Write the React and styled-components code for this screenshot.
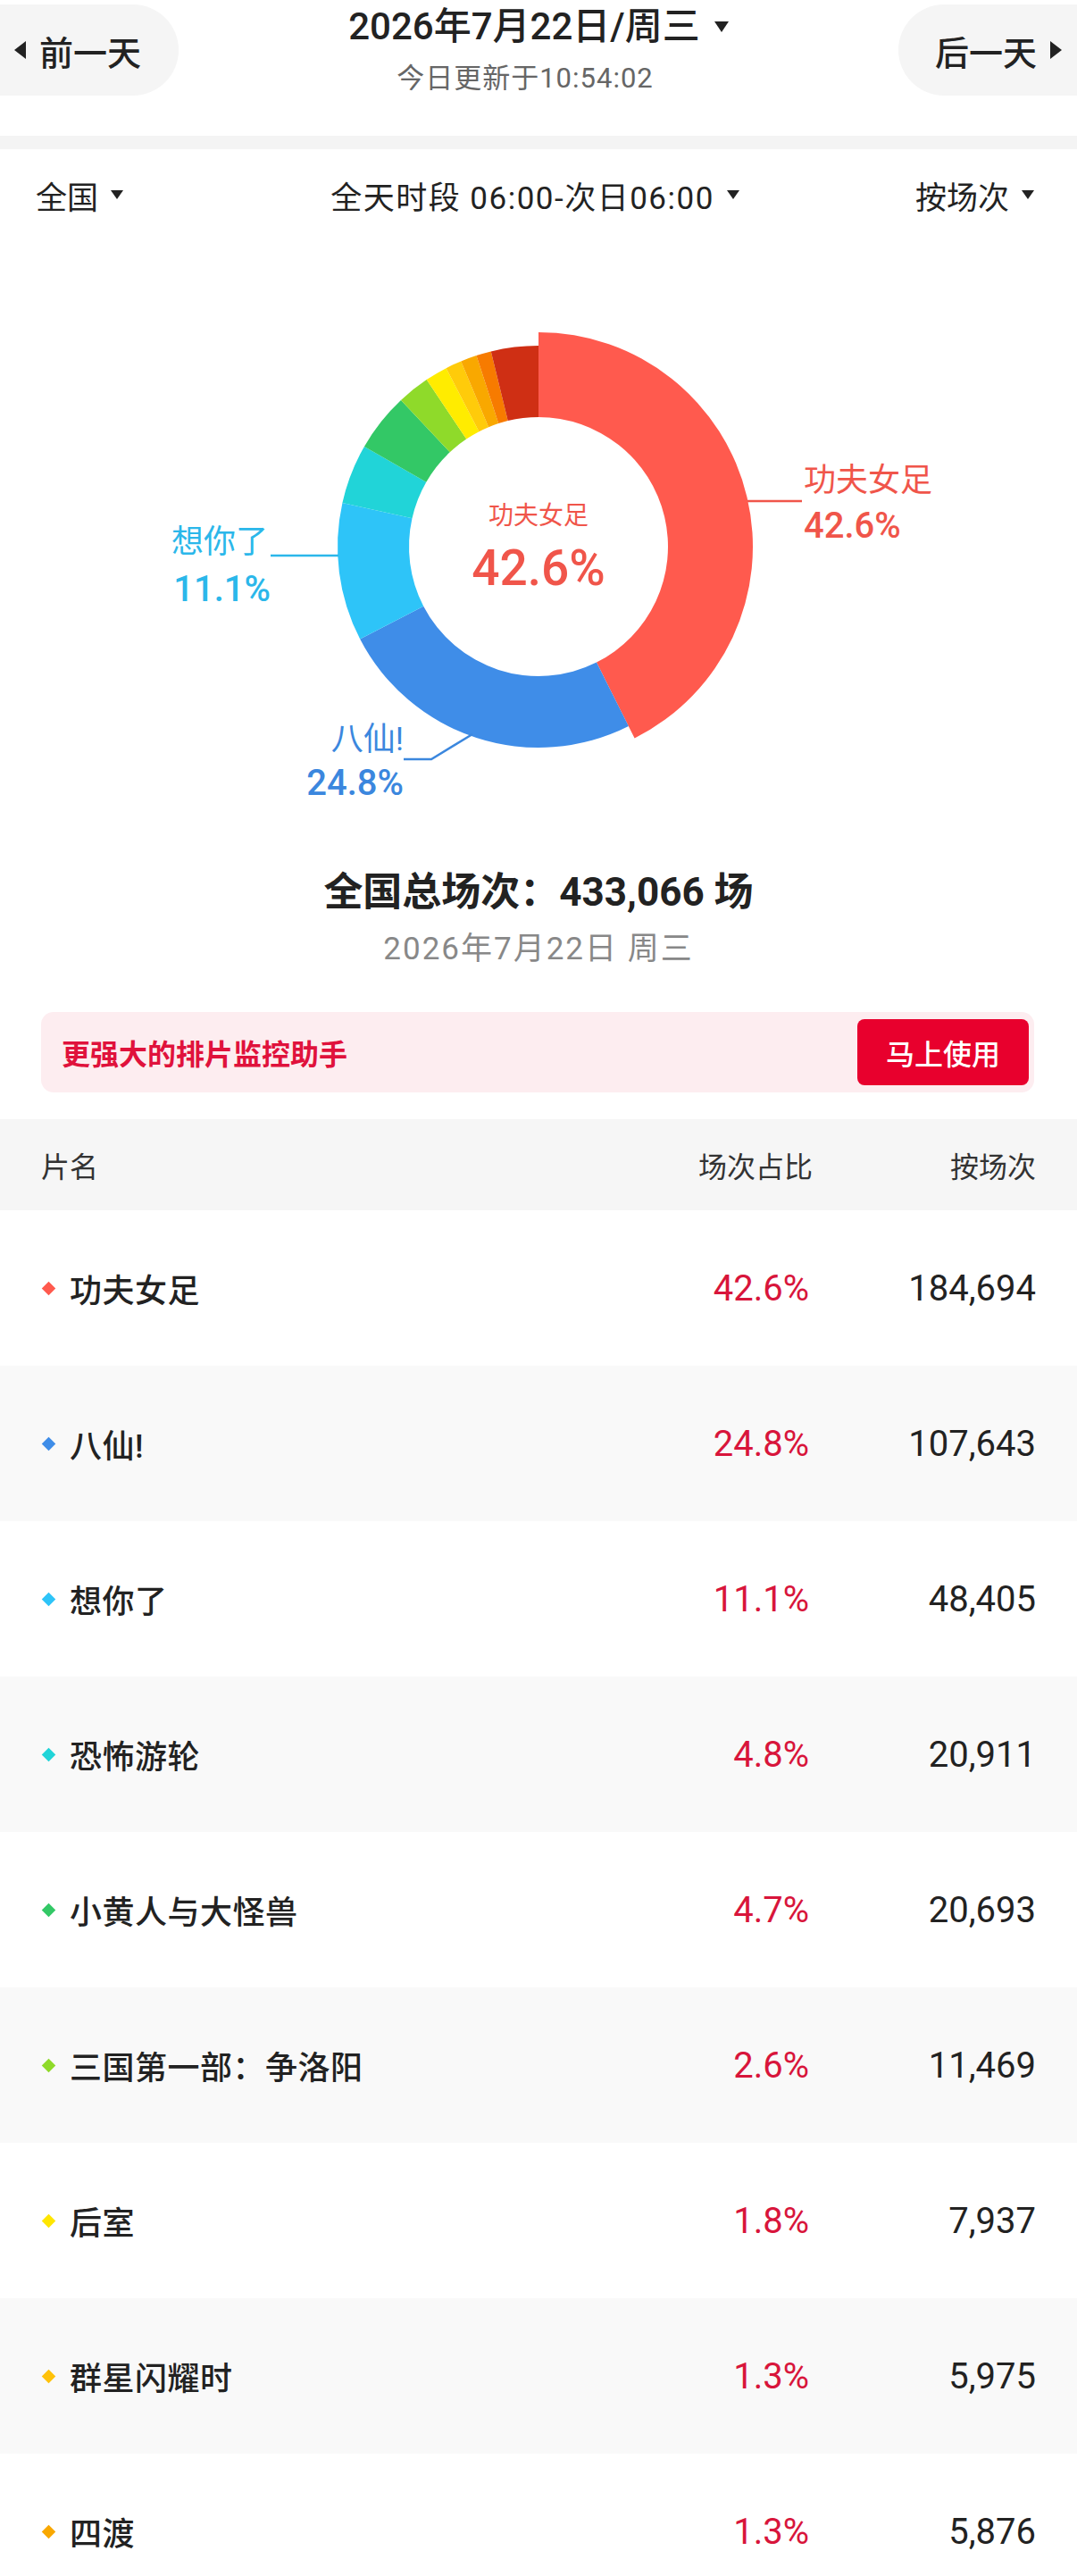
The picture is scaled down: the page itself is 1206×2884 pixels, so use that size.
import React from 'react';
import styled, { createGlobalStyle, css } from 'styled-components';

const GlobalStyle = createGlobalStyle`
    body {
        margin: 0;
        background: #ffffff;
        font-family: Roboto, "Noto Sans CJK SC", "Noto Sans", sans-serif;
        color: #222;
        overflow-x: hidden;
    }
`;

const slices = [
    { name: '功夫女足', value: 42.6, color: '#ff5a4e' },
    { name: '八仙!', value: 24.8, color: '#3f8de8' },
    { name: '想你了', value: 11.1, color: '#2ec4f8' },
    { name: '恐怖游轮', value: 4.8, color: '#21d4d8' },
    { name: '小黄人与大怪兽', value: 4.7, color: '#33c866' },
    { name: '三国第一部：争洛阳', value: 2.6, color: '#8fda2a' },
    { name: '后室', value: 1.8, color: '#ffec00' },
    { name: '群星闪耀时', value: 1.3, color: '#ffcb0a' },
    { name: '四渡', value: 1.3, color: '#f9a800' },
    { name: 'other-a', value: 1.2, color: '#f77b00' },
    { name: 'other-b', value: 3.8, color: '#cf2f14' },
];

const films = [
    { name: '功夫女足', pct: '42.6%', count: '184,694', color: '#ff5a4e' },
    { name: '八仙!', pct: '24.8%', count: '107,643', color: '#3f8de8' },
    { name: '想你了', pct: '11.1%', count: '48,405', color: '#2ec4f8' },
    { name: '恐怖游轮', pct: '4.8%', count: '20,911', color: '#21d4d8' },
    { name: '小黄人与大怪兽', pct: '4.7%', count: '20,693', color: '#33c866' },
    { name: '三国第一部：争洛阳', pct: '2.6%', count: '11,469', color: '#8fda2a' },
    { name: '后室', pct: '1.8%', count: '7,937', color: '#ffe600' },
    { name: '群星闪耀时', pct: '1.3%', count: '5,975', color: '#ffc20a' },
    { name: '四渡', pct: '1.3%', count: '5,876', color: '#f9a800' },
];

/* ---------- header ---------- */

const Header = styled.header`
    display: flex;
    justify-content: space-between;
    height: 152px;
    background: #fff;
`;

const DayButton = styled.div`
    margin-top: 5px;
    width: 200px;
    height: 102px;
    box-sizing: border-box;
    display: flex;
    align-items: center;
    gap: 15px;
    background: #f5f5f5;
    font-size: 38px;
    font-weight: 500;
    color: #222;
    ${({ $side }) =>
        $side === 'left'
            ? css`
                  border-radius: 0 51px 51px 0;
                  padding-left: 16px;
              `
            : css`
                  border-radius: 51px 0 0 51px;
                  justify-content: flex-end;
                  padding-right: 17px;
              `}
`;

const SideArrow = styled.span`
    width: 0;
    height: 0;
    border-top: 10px solid transparent;
    border-bottom: 10px solid transparent;
    ${({ $dir }) =>
        $dir === 'left'
            ? css`border-right: 13px solid #222;`
            : css`border-left: 13px solid #222;`}
`;

const DropArrow = styled.span`
    display: inline-block;
    width: 0;
    height: 0;
    border-left: ${({ $size }) => $size || 7}px solid transparent;
    border-right: ${({ $size }) => $size || 7}px solid transparent;
    border-top: ${({ $size }) => ($size || 7) * 1.5}px solid #222;
    margin-left: ${({ $gap }) => $gap || 14}px;
    vertical-align: middle;
`;

const TitleBlock = styled.div`
    display: flex;
    flex-direction: column;
    align-items: center;
`;

const DateTitle = styled.div`
    margin-top: 5px;
    font-size: 42px;
    line-height: 50px;
    font-weight: 500;
    color: #222;
    display: flex;
    align-items: center;
`;

const UpdatedAt = styled.div`
    margin-top: 15px;
    margin-right: 30px;
    font-size: 31px;
    line-height: 36px;
    letter-spacing: 1px;
    color: #666;
`;

const Band = styled.div`
    height: 15px;
    background: #f4f4f4;
`;

/* ---------- filters ---------- */

const FilterRow = styled.div`
    display: grid;
    grid-template-columns: 1fr auto 1fr;
    align-items: center;
    height: 102px;
    padding: 0 48px 0 40px;
    font-size: 35px;
    color: #222;
`;

const Filter = styled.div`
    display: flex;
    align-items: center;
    justify-self: ${({ $align }) => $align || 'center'};
    letter-spacing: ${({ $spread }) => ($spread ? '1.5px' : '0')};
`;

/* ---------- donut chart ---------- */

const ChartBox = styled.div`
    display: flex;
    justify-content: center;
    height: 670px;
`;

const ChartText = styled.text`
    font-family: Roboto, "Noto Sans CJK SC", sans-serif;
    font-size: ${({ $size }) => $size}px;
    font-weight: ${({ $bold }) => ($bold ? 500 : 400)};
    fill: ${({ $color }) => $color};
`;

const CX = 603;
const CY = 343;
const R_IN = 145;
const R_OUT = 225;
const R_ACTIVE = 240;

function arcPath(r0, r1, a0, a1) {
    const pt = (r, a) => [CX + r * Math.sin(a), CY - r * Math.cos(a)];
    const large = a1 - a0 > Math.PI ? 1 : 0;
    const [x0, y0] = pt(r1, a0);
    const [x1, y1] = pt(r1, a1);
    const [x2, y2] = pt(r0, a1);
    const [x3, y3] = pt(r0, a0);
    return `M${x0} ${y0} A${r1} ${r1} 0 ${large} 1 ${x1} ${y1} L${x2} ${y2} A${r0} ${r0} 0 ${large} 0 ${x3} ${y3} Z`;
}

function Donut() {
    let acc = 0;
    const arcs = slices.map((s, i) => {
        const a0 = (acc / 100) * Math.PI * 2;
        acc += s.value;
        const a1 = (acc / 100) * Math.PI * 2;
        return (
            <path
                key={s.name}
                d={arcPath(R_IN, i === 0 ? R_ACTIVE : R_OUT, a0, a1)}
                fill={s.color}
            />
        );
    });

    return (
        <svg width="1206" height="670" viewBox="0 0 1206 670">
            {arcs}

            {/* centre */}
            <ChartText x={CX} y={318} $size={28} $color="#f0554a" textAnchor="middle">
                功夫女足
            </ChartText>
            <ChartText x={CX} y={386} $size={55} $bold $color="#f0554a" textAnchor="middle">
                42.6%
            </ChartText>

            {/* leading slice */}
            <line x1="837" y1="292" x2="898" y2="292" stroke="#f0554a" strokeWidth="2.5" />
            <ChartText x={900} y={281} $size={36} $color="#f0554a">
                功夫女足
            </ChartText>
            <ChartText x={900} y={333} $size={40} $bold $color="#f0554a">
                42.6%
            </ChartText>

            {/* 想你了 */}
            <line x1="303" y1="353" x2="379" y2="353" stroke="#2bb7ea" strokeWidth="2.5" />
            <ChartText x={300} y={350} $size={36} $color="#2bb7ea" textAnchor="end">
                想你了
            </ChartText>
            <ChartText x={303} y={404} $size={40} $bold $color="#2bb7ea" textAnchor="end">
                11.1%
            </ChartText>

            {/* 八仙 */}
            <polyline
                points="452,581 483,581 529,553"
                fill="none"
                stroke="#3b87de"
                strokeWidth="2.5"
            />
            <ChartText x={452} y={571} $size={36} $color="#3b87de" textAnchor="end">
                八仙!
            </ChartText>
            <ChartText x={452} y={621} $size={40} $bold $color="#3b87de" textAnchor="end">
                24.8%
            </ChartText>
        </svg>
    );
}

/* ---------- summary ---------- */

const Total = styled.div`
    margin-top: 34px;
    text-align: center;
    font-size: 44px;
    line-height: 52px;
    font-weight: 700;
    color: #222;
`;

const TotalDate = styled.div`
    margin-top: 18px;
    text-align: center;
    font-size: 35px;
    line-height: 40px;
    letter-spacing: 2px;
    color: #888;
`;

const Promo = styled.div`
    margin: 50px 48px 30px 46px;
    height: 90px;
    box-sizing: border-box;
    display: flex;
    align-items: center;
    justify-content: space-between;
    padding: 0 6px 0 23px;
    background: #fdedf0;
    border-radius: 14px;
`;

const PromoText = styled.span`
    font-size: 32px;
    font-weight: 700;
    color: #e0123c;
`;

const PromoButton = styled.button`
    width: 192px;
    height: 74px;
    border: none;
    border-radius: 8px;
    background: #e8002d;
    color: #fff;
    font-family: inherit;
    font-size: 32px;
    font-weight: 500;
`;

/* ---------- table ---------- */

const Grid = css`
    display: grid;
    grid-template-columns: 1fr 300px 250px;
    align-items: center;
    padding: 0 46px;
`;

const TableHead = styled.div`
    ${Grid}
    height: 102px;
    background: #f6f6f6;
    font-size: 32px;
    color: #333;
`;

const Row = styled.div`
    ${Grid}
    height: 174px;
    background: ${({ $shade }) => ($shade ? '#f9f9f9' : '#fff')};
`;

const Cell = styled.div`
    justify-self: ${({ $align }) => $align || 'start'};
`;

const FilmName = styled.div`
    display: flex;
    align-items: center;
    gap: 18px;
    font-size: 36px;
    font-weight: 500;
    letter-spacing: 0.5px;
    color: #222;
`;

const Marker = styled.span`
    width: 11px;
    height: 11px;
    margin-left: 3px;
    background: ${({ $color }) => $color};
    transform: rotate(45deg);
`;

const Pct = styled.div`
    justify-self: end;
    margin-right: 4px;
    font-size: 40px;
    color: #d8153b;
`;

const Count = styled.div`
    justify-self: end;
    font-size: 40px;
    color: #222;
`;

export default function App() {
    return (
        <>
            <GlobalStyle />
            <Header>
                <DayButton $side="left">
                    <SideArrow $dir="left" />
                    前一天
                </DayButton>
                <TitleBlock>
                    <DateTitle>
                        2026年7月22日/周三
                        <DropArrow $size={8} $gap={16} />
                    </DateTitle>
                    <UpdatedAt>今日更新于10:54:02</UpdatedAt>
                </TitleBlock>
                <DayButton $side="right">
                    后一天
                    <SideArrow $dir="right" />
                </DayButton>
            </Header>
            <Band />

            <FilterRow>
                <Filter $align="start">
                    全国
                    <DropArrow />
                </Filter>
                <Filter $spread>
                    全天时段 06:00-次日06:00
                    <DropArrow />
                </Filter>
                <Filter $align="end">
                    按场次
                    <DropArrow />
                </Filter>
            </FilterRow>

            <ChartBox>
                <Donut />
            </ChartBox>

            <Total>全国总场次：433,066 场</Total>
            <TotalDate>2026年7月22日 周三</TotalDate>

            <Promo>
                <PromoText>更强大的排片监控助手</PromoText>
                <PromoButton>马上使用</PromoButton>
            </Promo>

            <TableHead>
                <Cell>片名</Cell>
                <Cell $align="end">场次占比</Cell>
                <Cell $align="end">按场次</Cell>
            </TableHead>
            {films.map((f, i) => (
                <Row key={f.name} $shade={i % 2 === 1}>
                    <FilmName>
                        <Marker $color={f.color} />
                        {f.name}
                    </FilmName>
                    <Pct>{f.pct}</Pct>
                    <Count>{f.count}</Count>
                </Row>
            ))}
        </>
    );
}
